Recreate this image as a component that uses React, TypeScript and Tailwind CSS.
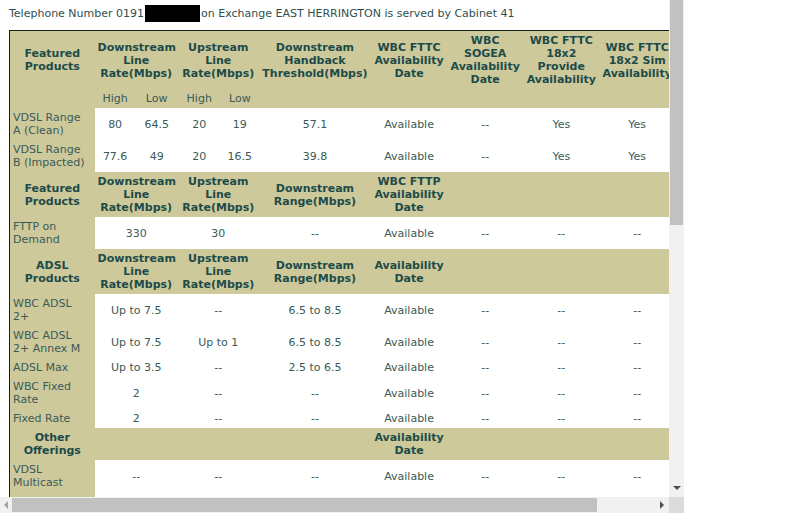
import React from "react";

const HEAD = "bg-[#cdc99b] font-bold text-[#1d4b49] text-center align-middle px-[3px] py-[3px]";
const SUB = "bg-[#cdc99b] font-normal text-[#3a5a58] text-center align-middle px-[3px] py-[3px]";
const NAME = "bg-[#cdc99b] text-[#3a5a58] text-left align-middle px-[3px] py-[3px]";
const CELL = "bg-white text-[#3a5a58] text-center align-middle px-[3px] py-[3px]";

type Row = { name: React.ReactNode; cells: { v: string; span?: number }[] };

const vdslRows: Row[] = [
  {
    name: (<>VDSL Range<br />A (Clean)</>),
    cells: [{ v: "80" }, { v: "64.5" }, { v: "20" }, { v: "19" }, { v: "57.1" }, { v: "Available" }, { v: "--" }, { v: "Yes" }, { v: "Yes" }],
  },
  {
    name: (<>VDSL Range<br />B (Impacted)</>),
    cells: [{ v: "77.6" }, { v: "49" }, { v: "20" }, { v: "16.5" }, { v: "39.8" }, { v: "Available" }, { v: "--" }, { v: "Yes" }, { v: "Yes" }],
  },
];

const adslRows: Row[] = [
  { name: (<>WBC ADSL<br />2+</>), cells: [{ v: "Up to 7.5", span: 2 }, { v: "--", span: 2 }, { v: "6.5 to 8.5" }, { v: "Available" }, { v: "--" }, { v: "--" }, { v: "--" }] },
  { name: (<>WBC ADSL<br />2+ Annex M</>), cells: [{ v: "Up to 7.5", span: 2 }, { v: "Up to 1", span: 2 }, { v: "6.5 to 8.5" }, { v: "Available" }, { v: "--" }, { v: "--" }, { v: "--" }] },
  { name: "ADSL Max", cells: [{ v: "Up to 3.5", span: 2 }, { v: "--", span: 2 }, { v: "2.5 to 6.5" }, { v: "Available" }, { v: "--" }, { v: "--" }, { v: "--" }] },
  { name: (<>WBC Fixed<br />Rate</>), cells: [{ v: "2", span: 2 }, { v: "--", span: 2 }, { v: "--" }, { v: "Available" }, { v: "--" }, { v: "--" }, { v: "--" }] },
  { name: "Fixed Rate", cells: [{ v: "2", span: 2 }, { v: "--", span: 2 }, { v: "--" }, { v: "Available" }, { v: "--" }, { v: "--" }, { v: "--" }] },
];

function DataRow({ row }: { row: Row }) {
  return (
    <tr>
      <td className={NAME}>{row.name}</td>
      {row.cells.map((c, i) => (
        <td key={i} colSpan={c.span ?? 1} className={CELL}>
          {c.v}
        </td>
      ))}
    </tr>
  );
}

function Arrow({ dir, color }: { dir: "left" | "right" | "down"; color: string }) {
  const pts = dir === "left" ? "5,0 5,8 1,4" : dir === "right" ? "1,0 1,8 5,4" : "0,1 8,1 4,5";
  const w = dir === "down" ? 8 : 6;
  const h = dir === "down" ? 6 : 8;
  return (
    <svg width={w} height={h} viewBox={`0 0 ${w} ${h}`}>
      <polygon points={pts} fill={color} />
    </svg>
  );
}

export default function App() {
  return (
    <div className="flex flex-col w-[684px] h-[513px] bg-white">
      <div className="flex h-[497px]">
        {/* scrolled content */}
        <div className="w-[669px] h-[497px] overflow-hidden">
          <div
            className="w-[737px] text-[11px] leading-[13px] text-[#2f4f4f]"
            style={{ fontFamily: '"DejaVu Sans", Verdana, sans-serif' }}
          >
            {/* telephone line */}
            <div className="flex items-center h-[27px] pl-[9px] whitespace-nowrap">
              <span>Telephone Number 0191</span>
              <span className="inline-block w-[55px] h-[17px] bg-black ml-[1px]" />
              <span className="ml-[1px]">on Exchange EAST HERRINGTON is served by Cabinet 41</span>
            </div>

            <table className="mt-[3px] ml-[9px] border border-[#1a1a1a] border-collapse table-fixed w-[667px] bg-[#cdc99b]">
              <colgroup>
                <col className="w-[85px]" />
                <col className="w-[41px]" />
                <col className="w-[42px]" />
                <col className="w-[43px]" />
                <col className="w-[38px]" />
                <col className="w-[112px]" />
                <col className="w-[76px]" />
                <col className="w-[76px]" />
                <col className="w-[76px]" />
                <col className="w-[76px]" />
              </colgroup>
              <tbody>
                {/* VDSL header */}
                <tr>
                  <td className={HEAD}>Featured<br />Products</td>
                  <td colSpan={2} className={HEAD}>Downstream<br />Line<br />Rate(Mbps)</td>
                  <td colSpan={2} className={HEAD}>Upstream<br />Line<br />Rate(Mbps)</td>
                  <td className={HEAD}>Downstream<br />Handback<br />Threshold(Mbps)</td>
                  <td className={HEAD}>WBC FTTC<br />Availability<br />Date</td>
                  <td className={HEAD}>WBC<br />SOGEA<br />Availability<br />Date</td>
                  <td className={HEAD}>WBC FTTC<br />18x2<br />Provide<br />Availability</td>
                  <td className={`${HEAD} whitespace-nowrap`}>WBC FTTC<br />18x2 Sim<br />Availability</td>
                </tr>
                <tr>
                  <td className={SUB}></td>
                  <td className={SUB}>High</td>
                  <td className={SUB}>Low</td>
                  <td className={SUB}>High</td>
                  <td className={SUB}>Low</td>
                  <td className={SUB}></td>
                  <td className={SUB}></td>
                  <td className={SUB}></td>
                  <td className={SUB}></td>
                  <td className={SUB}>&nbsp;</td>
                </tr>
                {vdslRows.map((r, i) => (
                  <DataRow key={i} row={r} />
                ))}

                {/* FTTP header */}
                <tr>
                  <td className={HEAD}>Featured<br />Products</td>
                  <td colSpan={2} className={HEAD}>Downstream<br />Line<br />Rate(Mbps)</td>
                  <td colSpan={2} className={HEAD}>Upstream<br />Line<br />Rate(Mbps)</td>
                  <td className={HEAD}>Downstream<br />Range(Mbps)</td>
                  <td className={HEAD}>WBC FTTP<br />Availability<br />Date</td>
                  <td className={HEAD}></td>
                  <td className={HEAD}></td>
                  <td className={HEAD}></td>
                </tr>
                <DataRow
                  row={{
                    name: (<>FTTP on<br />Demand</>),
                    cells: [{ v: "330", span: 2 }, { v: "30", span: 2 }, { v: "--" }, { v: "Available" }, { v: "--" }, { v: "--" }, { v: "--" }],
                  }}
                />

                {/* ADSL header */}
                <tr>
                  <td className={HEAD}>ADSL<br />Products</td>
                  <td colSpan={2} className={HEAD}>Downstream<br />Line<br />Rate(Mbps)</td>
                  <td colSpan={2} className={HEAD}>Upstream<br />Line<br />Rate(Mbps)</td>
                  <td className={HEAD}>Downstream<br />Range(Mbps)</td>
                  <td className={HEAD}>Availability<br />Date</td>
                  <td className={HEAD}></td>
                  <td className={HEAD}></td>
                  <td className={HEAD}></td>
                </tr>
                {adslRows.map((r, i) => (
                  <DataRow key={i} row={r} />
                ))}

                {/* other offerings */}
                <tr>
                  <td className={HEAD}>Other<br />Offerings</td>
                  <td colSpan={2} className={HEAD}></td>
                  <td colSpan={2} className={HEAD}></td>
                  <td className={HEAD}></td>
                  <td className={HEAD}>Availability<br />Date</td>
                  <td className={HEAD}></td>
                  <td className={HEAD}></td>
                  <td className={HEAD}></td>
                </tr>
                <DataRow
                  row={{
                    name: (<>VDSL<br />Multicast</>),
                    cells: [{ v: "--", span: 2 }, { v: "--", span: 2 }, { v: "--" }, { v: "Available" }, { v: "--" }, { v: "--" }, { v: "--" }],
                  }}
                />
                <tr>
                  <td className={NAME}>&nbsp;<br />&nbsp;</td>
                  <td colSpan={9} className={CELL}></td>
                </tr>
              </tbody>
            </table>
          </div>
        </div>

        {/* vertical scrollbar */}
        <div className="flex flex-col w-[15px] bg-[#f1f1f1]">
          <div className="h-[225px] mx-[1px] bg-[#c1c1c1]" />
          <div className="flex-1" />
          <div className="flex h-[17px] items-center justify-center pb-[2px]">
            <Arrow dir="down" color="#505050" />
          </div>
        </div>
      </div>

      {/* horizontal scrollbar */}
      <div className="flex h-[16px]">
        <div className="flex w-[669px] items-center bg-[#f1f1f1]">
          <div className="flex w-[12px] h-full items-center justify-center">
            <Arrow dir="left" color="#a3a3a3" />
          </div>
          <div className="w-[585px] h-[14px] bg-[#c1c1c1]" />
          <div className="flex-1" />
          <div className="flex w-[15px] h-full items-center justify-center">
            <Arrow dir="right" color="#505050" />
          </div>
        </div>
        <div className="w-[15px] bg-[#dcdcdc]" />
      </div>
    </div>
  );
}
